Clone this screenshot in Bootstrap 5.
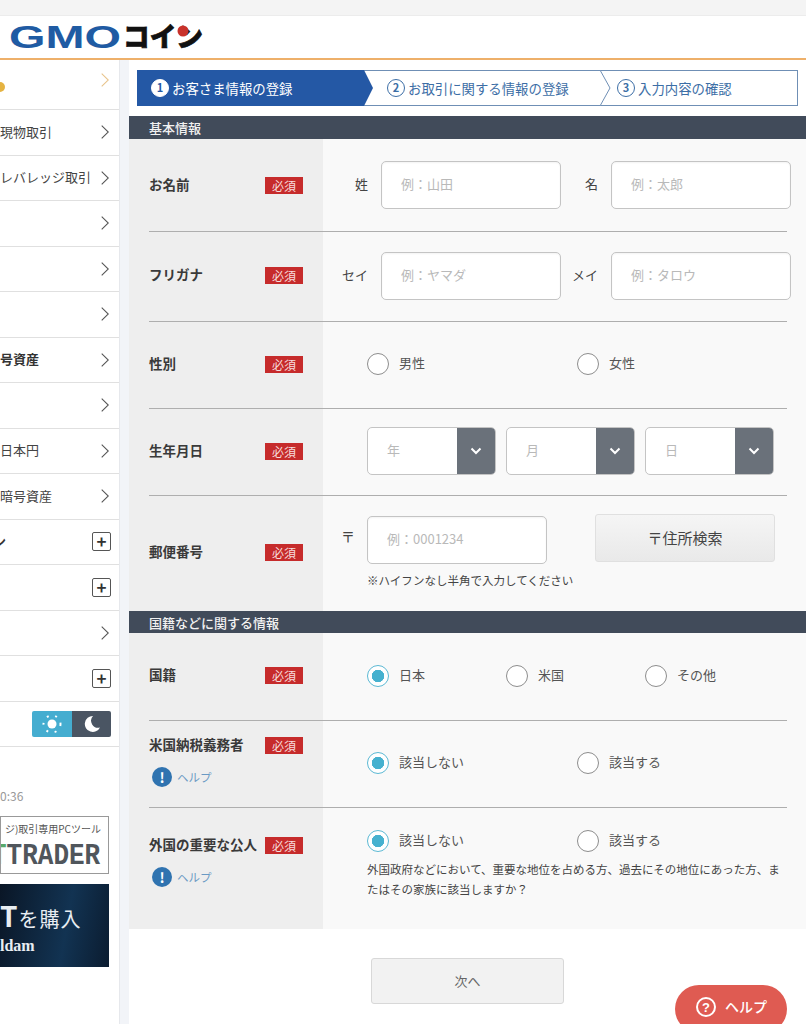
<!DOCTYPE html>
<html lang="ja">
<head>
<meta charset="utf-8">
<title>GMOコイン</title>
<link href="https://cdn.jsdelivr.net/npm/bootstrap@5.3.0/dist/css/bootstrap.min.css" rel="stylesheet">
<style>
html,body{height:1024px;overflow:hidden}
body{font-family:"Noto Sans CJK JP","Noto Sans",sans-serif;background:#fff;color:#333;font-size:13px;position:relative}
.topstrip{height:16px;background:#f4f4f4;border-bottom:1px solid #ececec}
.sitehead{height:44px;background:#fff;border-bottom:2px solid #eeb06a;padding-left:9px}
.shell{height:964px}
.sidepane{width:119px;flex:none;overflow:hidden;background:#fff}
.gutterline{width:10px;flex:none;background:#f2f4f8;border-left:1px solid #e6e8ec}
.mainpane{flex:1;min-width:0;background:#fff}
.siderow{height:45.5px;border-bottom:1px solid #e0e0e0;padding:0 8px 0 0;font-size:13px;color:#444;white-space:nowrap}
.siderow.firstrow{height:50px;align-items:flex-start!important;padding-top:13px}
.siderow.strong{font-weight:700;color:#333;font-size:13px}
.siderow>span:first-child:not(.plusbox){padding-bottom:2px}
.sidechev{width:8px;height:14px;margin-right:2px;color:#555}
.sidedot{width:5px;height:10px;background:#e5b341;border-radius:0 5px 5px 0;margin-top:9px;padding:0!important}
.cutglyph{margin-left:-7px}
.plusbox{width:19px;height:19px;border:1px solid #555;border-radius:2px;font-size:17px;line-height:16px;text-align:center;color:#333;font-weight:700}
.modetoggle{width:79px;height:26px;border-radius:2px;overflow:hidden}
.modeday{width:40px;background:#45add0}
.modenight{flex:1;background:#4a5563}
.clocktext{color:#999;font-size:12px;margin-top:40px;height:29px}
.promo1{height:58px;width:109px;border:1px solid #999;overflow:hidden;padding:0;background:#fff}
.promo1top{font-size:10px;color:#555;line-height:14px;margin-top:5px;white-space:nowrap;width:100px;text-align:right}
.promo1big{font-family:"Liberation Mono",monospace;font-weight:700;font-size:26px;line-height:28px;color:#50565c;white-space:nowrap;width:100px;margin-top:6px;transform:scaleY(1.15)}
.promo1big i{font-style:normal;color:#5aa96a;margin-left:-10px}
.promo2{height:83px;width:109px;margin-top:10px;background:linear-gradient(100deg,#0a1626,#123352 60%,#0b1c30);color:#e8edf2;overflow:hidden}
.promo2big{font-size:20px;line-height:24px;margin-top:19px;white-space:nowrap;letter-spacing:1px;width:80px;text-align:right}
.promo2big b{font-size:28px;font-weight:700}
.promo2sub{font-family:"Liberation Serif",serif;font-weight:700;font-size:16px;line-height:18px;margin-top:6px}
.stepwrap{padding:10px 8px}
.stepbar{height:36px;border:1px solid #6f8fb5;position:relative;color:#3c6ea6;font-size:13.4px}
.stepone{width:236px;margin:-1px 0 -1px -1px;height:36px;background:#2458a5;color:#fff;padding-left:14px;clip-path:polygon(0 0,227px 0,236px 50%,227px 100%,0 100%);flex:none}
.steptwo{width:227px;flex:none;padding-left:14px}
.stepthree{flex:1;padding-left:17px}
.stepnum{width:18px;height:18px;border-radius:50%;border:1.5px solid #3c6ea6;font-size:11px;line-height:15px;text-align:center;font-weight:700;margin-right:3px;flex:none}
.stepone .stepnum{background:#fff;color:#2458a5;border-color:#fff}
.stepchev{position:absolute;top:-1px;height:36px;width:12px}
.sechead{height:23px;background:#414b5a;color:#f1f1f1;padding-left:20px;font-size:13px;line-height:23px;font-weight:500}
.secshort{height:22px}
.formblock{background:linear-gradient(90deg,#eeeeee 194px,#f9f9f9 194px)}
.frow{margin:0 19px 0 20px;border-bottom:1px solid #aeaeae}
.frow.noline{border-bottom:0}
.h93{height:93px}.h90{height:90px;padding-bottom:2px}.h87{height:87px;padding-bottom:2px}.h88{height:88px;padding-bottom:2px}.h115{height:115px}.h121{height:121px;padding-top:22px}
.flabel{width:174px;flex:none;padding-right:20px;font-weight:700;font-size:13.5px;color:#3a3a3a}
.flabel span:first-child:not(.helpdot){padding-bottom:2px}
.labeltop{padding-top:13px;align-self:flex-start}
.labelnudge{margin-top:4px}
.zipnudge{margin-top:45px}
.reqtag{background:#c62b2b;color:#f6dcdc;font-size:12px;font-weight:400;width:38px;height:17px;line-height:17px;text-align:center;flex:none}
.fieldcap{width:58px;flex:none;text-align:right;padding:0 13px 2px 0;font-size:13px;color:#444}
.capb{width:50px}
.textbox.form-control{width:180px;height:48px;border:1px solid #c4c4c4;border-radius:5px;padding:0 19px 3px;font-size:13px;box-shadow:inset 0 1px 2px rgba(0,0,0,.05);flex:none}
.textbox.form-control::placeholder{color:#b9b9b9;opacity:1}
.form-check-input.roundpick{width:22px;height:22px;margin:0 10px 0 0;border:1px solid #8d8d8d;background-color:#fff;flex:none;float:none}
.form-check-input.roundpick:checked{border-color:#5cb9d4;background-color:#fff;background-image:radial-gradient(circle,#46b1cf 0 6px,transparent 6.5px)}
.picklabel{font-size:13px;color:#555;padding-bottom:2px}
.pickgroup{width:210px;flex:none}
.pickg3{width:139px;flex:none}
.ylist{padding-left:44px}
.dategap{gap:10px}
.datebox{width:129px;height:48px;border:1px solid #c4c4c4;border-radius:5px;background:#fff;overflow:hidden;color:#b9b9b9;font-size:13px;padding-left:19px}
.datebox>span:first-child{padding-bottom:3px}
.datearrow{width:38px;height:48px;background:#6a717a;margin-left:auto}
.zipmark{width:44px;flex:none;font-size:14px;color:#444;margin-top:10px;padding-left:18px}
.zipbtn.btn{width:180px;height:48px;border:1px solid #e0e0e0;border-radius:3px;background:linear-gradient(#f5f5f5,#e9e9e9);font-size:15px;color:#444;margin-left:48px;margin-top:-2px;padding:0}
.zipbody{padding-top:20px}
.zipnote{font-size:11.5px;color:#444;margin:8px 0 0 44px}
.helplink{color:#6b9ac4;font-size:11.5px;font-weight:400;margin-top:11px}
.helpdot{width:20px;height:20px;border-radius:50%;background:#2f73b0;color:#fff;font-size:14px;line-height:20px;text-align:center;font-weight:700;margin:0 5px 0 3px}
.foreignnote{font-size:11.5px;line-height:20px;color:#444;margin:7px 0 0 44px;width:420px}
.nextwrap{padding-top:29px}
.nextbtn.btn{width:193px;height:46px;background:#f2f2f2;border:1px solid #d8d8d8;border-radius:3px;color:#666;font-size:13px;margin-left:242px;padding:0}
.helpfab{position:absolute;left:675px;top:985px;width:112px;height:48px;border-radius:24px;background:#df5b52;color:#fff;font-size:14px;font-weight:500;padding-top:7px}
.helpfab svg,.helpfab span{margin-top:4px}
</style>
</head>
<body>
<svg width="0" height="0" class="position-absolute">
<symbol id="chev" viewBox="0 0 8 14"><path d="M.7.7L7.3 7 .7 13.3" fill="none" stroke="currentColor" stroke-width="1.1"/></symbol>
<symbol id="down" viewBox="0 0 12 8"><path d="M1.5 1.5L6 6l4.5-4.5" fill="none" stroke="#fff" stroke-width="2"/></symbol>
</svg>

<div class="topstrip"></div>
<header class="sitehead d-flex align-items-center">
<svg width="200" height="30" viewBox="0 0 200 30">
<text x="0" y="26" textLength="112" lengthAdjust="spacingAndGlyphs" font-family="Liberation Sans" font-weight="700" font-size="32" fill="#1f5ba3">GMO</text>
<text x="114" y="25" textLength="80" lengthAdjust="spacingAndGlyphs" font-family="Noto Sans CJK JP" font-weight="900" font-size="27" fill="#111" stroke="#111" stroke-width=".7">コイン</text>
<circle cx="174" cy="9" r="5.5" fill="#c8322b"/>
</svg>
</header>

<div class="shell d-flex">
<aside class="sidepane">
<div class="siderow firstrow d-flex justify-content-between"><span class="sidedot"></span><svg class="sidechev" style="color:#e8c48c"><use href="#chev"/></svg></div>
<div class="siderow d-flex align-items-center justify-content-between"><span>現物取引</span><svg class="sidechev"><use href="#chev"/></svg></div>
<div class="siderow d-flex align-items-center justify-content-between"><span>レバレッジ取引</span><svg class="sidechev"><use href="#chev"/></svg></div>
<div class="siderow d-flex align-items-center justify-content-end"><svg class="sidechev"><use href="#chev"/></svg></div>
<div class="siderow d-flex align-items-center justify-content-end"><svg class="sidechev"><use href="#chev"/></svg></div>
<div class="siderow d-flex align-items-center justify-content-end"><svg class="sidechev"><use href="#chev"/></svg></div>
<div class="siderow strong d-flex align-items-center justify-content-between"><span>号資産</span><svg class="sidechev"><use href="#chev"/></svg></div>
<div class="siderow d-flex align-items-center justify-content-end"><svg class="sidechev"><use href="#chev"/></svg></div>
<div class="siderow d-flex align-items-center justify-content-between"><span>日本円</span><svg class="sidechev"><use href="#chev"/></svg></div>
<div class="siderow d-flex align-items-center justify-content-between"><span>暗号資産</span><svg class="sidechev"><use href="#chev"/></svg></div>
<div class="siderow strong d-flex align-items-center justify-content-between"><span class="cutglyph">ン</span><span class="plusbox">+</span></div>
<div class="siderow d-flex align-items-center justify-content-end"><span class="plusbox">+</span></div>
<div class="siderow d-flex align-items-center justify-content-end"><svg class="sidechev"><use href="#chev"/></svg></div>
<div class="siderow d-flex align-items-center justify-content-end"><span class="plusbox">+</span></div>
<div class="siderow d-flex align-items-center justify-content-end">
<div class="modetoggle d-flex">
<div class="modeday d-flex align-items-center justify-content-center"><svg width="20" height="20" viewBox="0 0 20 20"><circle cx="10" cy="10" r="4.5" fill="#fff"/><g stroke="#fff" stroke-width="2" stroke-dasharray="2 6.6" fill="none"><circle cx="10" cy="10" r="8.5"/></g></svg></div>
<div class="modenight d-flex align-items-center justify-content-center"><svg width="18" height="18" viewBox="0 0 18 18"><path d="M10 1a8 8 0 1 0 7 11.5A7 7 0 0 1 10 1z" fill="#fff"/></svg></div>
</div>
</div>
<div class="clocktext">0:36</div>
<div class="promo1"><div class="promo1top">ジ)取引専用PCツール</div><div class="promo1big"><i>T</i>TRADER</div></div>
<div class="promo2"><div class="promo2big"><b>T</b>を購入</div><div class="promo2sub">ldam</div></div>
</aside>
<div class="gutterline"></div>
<main class="mainpane">
<div class="stepwrap">
<div class="stepbar d-flex align-items-center">
<div class="stepone d-flex align-items-center"><span class="stepnum">1</span><span>お客さま情報の登録</span></div>
<div class="steptwo d-flex align-items-center"><span class="stepnum">2</span><span>お取引に関する情報の登録</span></div>
<div class="stepthree d-flex align-items-center"><span class="stepnum">3</span><span>入力内容の確認</span></div>
<svg class="stepchev" style="left:462px" viewBox="0 0 12 36"><path d="M0 0l10 18L0 36" fill="#fff" stroke="#6f8fb5"/></svg>
</div>
</div>

<div class="sechead">基本情報</div>
<div class="formblock">
<div class="frow h93 d-flex align-items-center">
<div class="flabel d-flex justify-content-between align-items-center"><span>お名前</span><span class="reqtag">必須</span></div>
<span class="fieldcap">姓</span><input class="form-control textbox" placeholder="例：山田">
<span class="fieldcap capb">名</span><input class="form-control textbox" placeholder="例：太郎">
</div>
<div class="frow h90 d-flex align-items-center">
<div class="flabel d-flex justify-content-between align-items-center"><span>フリガナ</span><span class="reqtag">必須</span></div>
<span class="fieldcap">セイ</span><input class="form-control textbox" placeholder="例：ヤマダ">
<span class="fieldcap capb">メイ</span><input class="form-control textbox" placeholder="例：タロウ">
</div>
<div class="frow h87 d-flex align-items-center">
<div class="flabel d-flex justify-content-between align-items-center"><span>性別</span><span class="reqtag">必須</span></div>
<div class="d-flex ylist">
<label class="pickgroup d-flex align-items-center"><input class="form-check-input roundpick" type="radio" name="g"><span class="picklabel">男性</span></label>
<label class="d-flex align-items-center"><input class="form-check-input roundpick" type="radio" name="g"><span class="picklabel">女性</span></label>
</div>
</div>
<div class="frow h87 d-flex align-items-center">
<div class="flabel d-flex justify-content-between align-items-center"><span>生年月日</span><span class="reqtag">必須</span></div>
<div class="d-flex dategap ylist">
<div class="datebox d-flex align-items-center"><span>年</span><span class="datearrow d-flex align-items-center justify-content-center"><svg width="12" height="8"><use href="#down"/></svg></span></div>
<div class="datebox d-flex align-items-center"><span>月</span><span class="datearrow d-flex align-items-center justify-content-center"><svg width="12" height="8"><use href="#down"/></svg></span></div>
<div class="datebox d-flex align-items-center"><span>日</span><span class="datearrow d-flex align-items-center justify-content-center"><svg width="12" height="8"><use href="#down"/></svg></span></div>
</div>
</div>
<div class="frow noline h115 d-flex align-items-start">
<div class="flabel d-flex justify-content-between align-items-center zipnudge"><span>郵便番号</span><span class="reqtag">必須</span></div>
<div class="zipbody flex-grow-1">
<div class="d-flex align-items-start"><span class="zipmark">〒</span><input class="form-control textbox" placeholder="例：0001234"><button type="button" class="btn zipbtn">〒住所検索</button></div>
<div class="zipnote">※ハイフンなし半角で入力してください</div>
</div>
</div>
</div>

<div class="sechead secshort">国籍などに関する情報</div>
<div class="formblock">
<div class="frow h88 d-flex align-items-center">
<div class="flabel d-flex justify-content-between align-items-center"><span>国籍</span><span class="reqtag">必須</span></div>
<div class="d-flex ylist">
<label class="pickg3 d-flex align-items-center"><input class="form-check-input roundpick" type="radio" name="n" checked><span class="picklabel">日本</span></label>
<label class="pickg3 d-flex align-items-center"><input class="form-check-input roundpick" type="radio" name="n"><span class="picklabel">米国</span></label>
<label class="d-flex align-items-center"><input class="form-check-input roundpick" type="radio" name="n"><span class="picklabel">その他</span></label>
</div>
</div>
<div class="frow h87 d-flex align-items-center">
<div class="flabel labeltop"><div class="d-flex justify-content-between align-items-center"><span>米国納税義務者</span><span class="reqtag">必須</span></div><div class="helplink d-flex align-items-center"><span class="helpdot">!</span>ヘルプ</div></div>
<div class="d-flex ylist">
<label class="pickgroup d-flex align-items-center"><input class="form-check-input roundpick" type="radio" name="u" checked><span class="picklabel">該当しない</span></label>
<label class="d-flex align-items-center"><input class="form-check-input roundpick" type="radio" name="u"><span class="picklabel">該当する</span></label>
</div>
</div>
<div class="frow noline h121 d-flex align-items-start">
<div class="flabel"><div class="d-flex justify-content-between align-items-center labelnudge"><span>外国の重要な公人</span><span class="reqtag">必須</span></div><div class="helplink d-flex align-items-center"><span class="helpdot">!</span>ヘルプ</div></div>
<div>
<div class="d-flex ylist">
<label class="pickgroup d-flex align-items-center"><input class="form-check-input roundpick" type="radio" name="f" checked><span class="picklabel">該当しない</span></label>
<label class="d-flex align-items-center"><input class="form-check-input roundpick" type="radio" name="f"><span class="picklabel">該当する</span></label>
</div>
<div class="foreignnote">外国政府などにおいて、重要な地位を占める方、過去にその地位にあった方、またはその家族に該当しますか？</div>
</div>
</div>
</div>
<div class="nextwrap"><button type="button" class="btn nextbtn">次へ</button></div>
</main>
</div>

<div class="helpfab d-flex align-items-start justify-content-center gap-2"><svg width="22" height="22" viewBox="0 0 22 22"><circle cx="11" cy="11" r="9" fill="none" stroke="#fff" stroke-width="2"/><text x="11" y="16" text-anchor="middle" font-size="13" font-weight="700" fill="#fff" font-family="Liberation Sans">?</text></svg><span>ヘルプ</span></div>

<script src="https://cdn.jsdelivr.net/npm/bootstrap@5.3.0/dist/js/bootstrap.bundle.min.js"></script>
</body>
</html>
